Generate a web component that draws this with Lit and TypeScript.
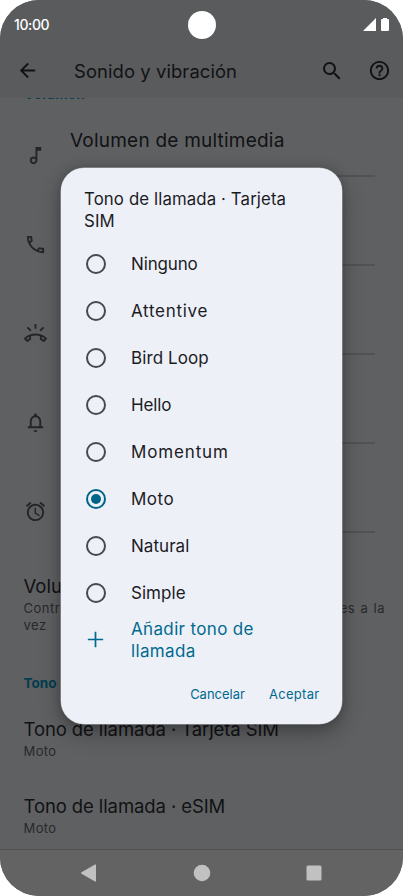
import { LitElement, html, css, svg } from "lit";
import { customElement } from "lit/decorators.js";
import { classMap } from "lit/directives/class-map.js";

const TONES = [
  ["Ninguno", "t0"], ["Attentive", "t1"], ["Bird Loop", "t2"], ["Hello", "t3"],
  ["Momentum", "t4"], ["Moto", "t5"], ["Natural", "t6"], ["Simple", "t7"],
];
const SELECTED = "Moto";

const icon = (d: string, size = 24) =>
  html`<svg width=${size} height=${size} viewBox="0 0 24 24" fill="currentColor">${svg`<path d=${d} />`}</svg>`;

const BACK = "M20 11H7.83l5.59-5.59L12 4l-8 8 8 8 1.41-1.41L7.83 13H20v-2z";
const SEARCH = "M15.5 14h-.79l-.28-.27A6.471 6.471 0 0 0 16 9.5 6.5 6.5 0 1 0 9.5 16c1.61 0 3.09-.59 4.23-1.57l.27.28v.79l5 4.99L20.49 19l-4.99-5zm-6 0C7.01 14 5 11.99 5 9.5S7.01 5 9.5 5 14 7.01 14 9.5 11.99 14 9.5 14z";
const HELP = "M11 18h2v-2h-2v2zm1-16C6.48 2 2 6.48 2 12s4.48 10 10 10 10-4.48 10-10S17.52 2 12 2zm0 18c-4.41 0-8-3.59-8-8s3.59-8 8-8 8 3.59 8 8-3.59 8-8 8zm0-14c-2.21 0-4 1.79-4 4h2c0-1.1.9-2 2-2s2 .9 2 2c0 2-3 1.75-3 5h2c0-2.25 3-2.5 3-5 0-2.21-1.79-4-4-4z";
const NOTE = "M12 3v10.55c-.59-.34-1.27-.55-2-.55-2.21 0-4 1.79-4 4s1.79 4 4 4 4-1.79 4-4V7h4V3h-6zm-2 16c-1.1 0-2-.9-2-2s.9-2 2-2 2 .9 2 2-.9 2-2 2z";
const PHONE = "M6.54 5c.06.89.21 1.76.45 2.59l-1.2 1.2c-.41-1.2-.67-2.47-.76-3.79h1.51m9.86 12.02c.85.24 1.72.39 2.6.45v1.49c-1.32-.09-2.59-.35-3.8-.75l1.2-1.19M7.5 3H4c-.55 0-1 .45-1 1 0 9.39 7.61 17 17 17 .55 0 1-.45 1-1v-3.49c0-.55-.45-1-1-1-1.24 0-2.45-.2-3.57-.57-.1-.04-.21-.05-.31-.05-.26 0-.51.1-.71.29l-2.2 2.2c-2.83-1.45-5.15-3.76-6.59-6.59l2.2-2.2c.28-.28.36-.67.25-1.02C8.7 6.45 8.5 5.25 8.5 4c0-.55-.45-1-1-1z";
const RING = "M23.71 16.67C20.66 13.78 16.54 12 12 12S3.34 13.78.29 16.67c-.18.18-.29.43-.29.71s.11.53.29.71l2.48 2.48c.18.18.43.29.71.29.27 0 .52-.11.7-.28.79-.74 1.69-1.36 2.66-1.85.33-.16.56-.5.56-.9v-3.1C8.85 14.25 10.4 14 12 14s3.15.25 4.59.73v3.1c0 .4.23.74.56.9.98.49 1.88 1.11 2.67 1.85.18.17.43.28.7.28.28 0 .53-.11.71-.29l2.48-2.48c.18-.18.29-.43.29-.71s-.11-.53-.29-.71zM5.41 17.2c-.66.37-1.29.8-1.89 1.27l-1.07-1.07c.93-.76 1.91-1.41 2.96-1.96v1.76zm15.07 1.26c-.6-.47-1.23-.9-1.89-1.27v-1.75c1.03.55 2.03 1.2 2.96 1.96l-1.07 1.06zM21.16 6.26l-1.41-1.41-3.56 3.55 1.41 1.41s3.45-3.52 3.56-3.55zM13 2h-2v5h2V2zM6.4 9.81L7.81 8.4 4.26 4.84 2.84 6.26c.11.03 3.56 3.55 3.56 3.55z";
const BELL = "M12 22c1.1 0 2-.9 2-2h-4c0 1.1.89 2 2 2zm6-6v-5c0-3.07-1.64-5.64-4.5-6.32V4c0-.83-.67-1.5-1.5-1.5s-1.5.67-1.5 1.5v.68C7.63 5.36 6 7.92 6 11v5H4v2h16v-2h-2zm-2 0H8v-5c0-2.48 1.51-4.5 4-4.5s4 2.02 4 4.5v5z";
const ALARM = "M22 5.72l-4.6-3.86-1.29 1.53 4.6 3.86L22 5.72zM7.88 3.39L6.6 1.86 2 5.71l1.29 1.53 4.59-3.85zM12.5 8H11v6l4.75 2.85.75-1.23-4-2.37V8zM12 4c-4.97 0-9 4.03-9 9s4.02 9 9 9a9 9 0 0 0 0-18zm0 16c-3.87 0-7-3.13-7-7s3.13-7 7-7 7 3.13 7 7-3.13 7-7 7z";
const PLUS = "M20 12.9h-7.1V20h-1.8v-7.1H4v-1.8h7.1V4h1.8v7.1H20z";

@customElement("app-root")
export class AppRoot extends LitElement {
  static styles = css`
    :host { display: block; width: 403px; height: 896px; background: #fff; font-family: Inter, "Open Sans", sans-serif; }
    * { box-sizing: border-box; }
    svg { display: block; flex: none; }
    .phone { position: relative; display: flex; flex-direction: column; height: 896px; border-radius: 39px; overflow: hidden; background: #5f6062; color: #111214; white-space: nowrap; }
    .status { flex: none; height: 50px; padding: 0 14px; background: #5a5b5d; color: #fff; display: flex; align-items: center; justify-content: space-between; }
    .clock { font-size: 14px; font-weight: 500; letter-spacing: -0.4px; width: 60px; padding-bottom: 1px; }
    .camera { width: 28px; height: 28px; border-radius: 50%; background: #fff; }
    .signals { display: flex; gap: 5px; width: 60px; justify-content: flex-end; padding-bottom: 1px; }
    .bar { flex: none; height: 48px; background: #5a5b5d; display: flex; align-items: center; padding: 0 12px 7px 16px; }
    .bar h1 { margin: 0 auto 0 35px; font-size: 18.4px; font-weight: 400; letter-spacing: 0.1px; }
    .help { margin-left: 24px; }
    .list { flex: 1; min-height: 0; overflow: hidden; }
    .section { font-size: 13.5px; font-weight: 700; line-height: 16px; color: #043c50; }
    .first { margin: -12px 0 0 24px; height: 16px; letter-spacing: 0.4px; }
    .slider { height: 89px; display: flex; padding: 0 28px 0 24px; color: #242527; }
    .slider svg { margin-top: 42px; }
    .control { flex: 1; margin-left: 23px; display: flex; flex-direction: column; padding: 27px 0 14px; }
    .name { font-size: 18.5px; line-height: 24px; color: #111214; }
    .vol { font-size: 19px; letter-spacing: 0.22px; }
    .sim, .esim { letter-spacing: -0.1px; }
    .track { margin-top: auto; margin-left: 1px; height: 2px; background: #515254; }
    .sliders { height: 446px; }
    .entry { padding: 0 18px 0 23.5px; }
    .sub { margin-top: 2px; font-size: 13px; line-height: 17px; letter-spacing: 0.4px; color: #28292b; }
    .both { margin-top: 26px; height: 101px; }
    .both .sub { white-space: normal; text-align: justify; letter-spacing: 0.5px; }
    .ring { height: 76.5px; }
    .tones { margin: 0 0 26px 23.5px; }
    .nav { flex: none; height: 47px; background: #636363; border-top: 1px solid #505153; display: flex; justify-content: space-between; padding: 14px 80px 0; color: #c1c1c1; }
    .dialog { position: absolute; left: 61px; top: 168px; width: 281px; height: 556px; border-radius: 23px; background: #eef0f8; color: #1b1c1f; box-shadow: 0 0 0 .5px #aeb0b6, 0 9px 22px rgba(0,0,0,.3), 0 0 10px rgba(0,0,0,.2); display: flex; flex-direction: column; padding: 20px 22.5px 0 23px; font-size: 17px; }
    .title { margin: 0; font-size: 16.8px; font-weight: 400; line-height: 22px; height: 52px; white-space: pre; letter-spacing: 0.12px; }
    .option { flex: none; height: 47px; display: flex; align-items: center; gap: 26.5px; line-height: 22px; }
    .t0, .t3 { letter-spacing: -0.15px; }
    .t1 { letter-spacing: 0.7px; }
    .t2 { letter-spacing: 0.1px; }
    .t4 { letter-spacing: 0.85px; }
    .t5 { letter-spacing: 0.5px; }
    .t6, .t7 { letter-spacing: 0.05px; }
    .radio { flex: none; width: 20px; height: 20px; margin-left: 1.5px; margin-right: -1px; border: 2px solid #47494d; border-radius: 50%; display: flex; align-items: center; justify-content: center; }
    .on { border-color: #006488; }
    .dot { width: 10px; height: 10px; border-radius: 50%; background: #006488; }
    .add { color: #006a8e; gap: 24px; white-space: pre; letter-spacing: 0.35px; }
    .actions { display: flex; justify-content: flex-end; gap: 24px; margin-top: 22px; font-size: 13px; line-height: 18px; color: #006a8e; }
    .ok { letter-spacing: 0.3px; }
  `;

  private slider(d: string, name = "") {
    return html`<div class="slider">${icon(d, 23)}
      <div class="control">${name ? html`<span class="name vol">${name}</span>` : ""}<div class="track"></div></div></div>`;
  }

  render() {
    return html`<div class="phone">
      <div class="status"><span class="clock">10:00</span><div class="camera"></div>
        <div class="signals">
          <svg width="13" height="13" viewBox="0 0 12 12" fill="currentColor"><path d="M12 0v12H0z" /></svg>
          <svg width="8" height="13" viewBox="0 0 8 13" fill="currentColor"><path d="M2 0h4v1h1a1 1 0 0 1 1 1v10a1 1 0 0 1-1 1H1a1 1 0 0 1-1-1V2a1 1 0 0 1 1-1h1z" /></svg>
        </div></div>
      <div class="bar">${icon(BACK, 23)}<h1>Sonido y vibración</h1>${icon(SEARCH, 24)}<div class="help">${icon(HELP, 23)}</div></div>
      <div class="list">
        <div class="section first">Volumen</div>
        <div class="sliders">
          ${this.slider(NOTE, "Volumen de multimedia")}${this.slider(PHONE)}${this.slider(RING)}${this.slider(BELL)}${this.slider(ALARM)}
        </div>
        <div class="entry both"><div class="name">Volumen</div>
          <div class="sub">Controla el volumen de llamadas y notificaciones a la vez</div></div>
        <div class="section tones">Tono</div>
        <div class="entry ring"><div class="name sim">Tono de llamada · Tarjeta SIM</div><div class="sub">Moto</div></div>
        <div class="entry ring"><div class="name esim">Tono de llamada · eSIM</div><div class="sub">Moto</div></div>
      </div>
      <div class="nav">
        <svg width="18" height="18" viewBox="0 0 18 18" fill="currentColor"><path d="M16 1.1v15.8q0 1-1 .6L1.5 9.8Q.5 9 1.5 8.2L15 .6q1-.5 1 .5z" /></svg>
        <svg width="18" height="18" viewBox="0 0 18 18" fill="currentColor"><circle cx="9" cy="9" r="8.3" /></svg>
        <svg width="18" height="18" viewBox="0 0 18 18" fill="currentColor"><rect x="1.5" y="1.5" width="15" height="15" rx="1.5" /></svg>
      </div>
      <div class="dialog">
        <h2 class="title">Tono de llamada · Tarjeta
SIM</h2>
        ${TONES.map(([name, cls]) => html`<div class="option">
          <div class=${classMap({ radio: true, on: name === SELECTED })}>${name === SELECTED ? html`<div class="dot"></div>` : ""}</div>
          <span class=${cls}>${name}</span></div>`)}
        <div class="option add">${icon(PLUS, 23)}<span class="label">Añadir tono de
llamada</span></div>
        <div class="actions"><span class="cancel">Cancelar</span><span class="ok">Aceptar</span></div>
      </div>
    </div>`;
  }
}
